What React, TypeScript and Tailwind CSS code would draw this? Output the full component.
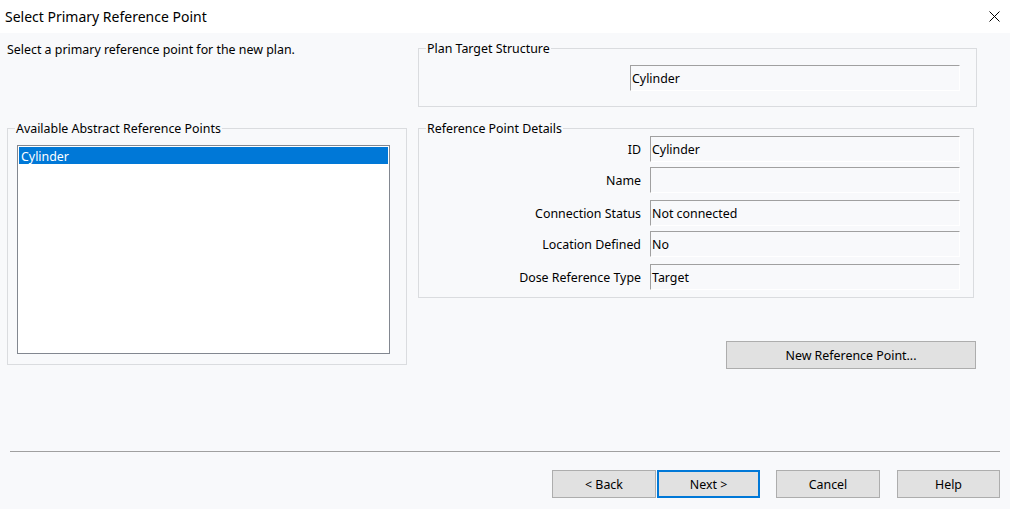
import React from "react";

const font = { fontFamily: '"Noto Sans", "Open Sans", sans-serif' };

function TextBox({ value, className = "" }: { value: string; className?: string }) {
  return (
    <div
      className={`h-[26px] flex items-center pl-[1px] pt-[2px] border-t border-l border-t-[#a0a0a0] border-l-[#a0a0a0] border-r border-b border-r-white border-b-white text-[12.4px] text-black ${className}`}
    >
      {value}
    </div>
  );
}

function Group({ label, className = "", children }: { label: string; className?: string; children?: React.ReactNode }) {
  return (
    <div className={`relative border border-[#dadcdf] ${className}`}>
      <span className="absolute -top-[8px] left-[7px] bg-[#f8f9fb] px-[1px] text-[12.4px] leading-[16px] text-black">
        {label}
      </span>
      {children}
    </div>
  );
}

function Button({ label, focused = false, className = "" }: { label: string; focused?: boolean; className?: string }) {
  return (
    <button
      className={`h-[28px] pt-[2px] bg-[#e1e1e1] text-[12.4px] text-black flex items-center justify-center ${
        focused ? "border-2 border-[#0078d7]" : "border border-[#adadad]"
      } ${className}`}
    >
      {label}
    </button>
  );
}

export default function App() {
  const details = [
    { label: "ID", value: "Cylinder", mt: "mt-[7px]" },
    { label: "Name", value: "", mt: "mt-[5px]" },
    { label: "Connection Status", value: "Not connected", mt: "mt-[7px]" },
    { label: "Location Defined", value: "No", mt: "mt-[5px]" },
    { label: "Dose Reference Type", value: "Target", mt: "mt-[7px]" },
  ];

  return (
    <div className="w-[1010px] h-[509px] flex flex-col bg-[#f8f9fb] overflow-hidden" style={font}>
      {/* Title bar */}
      <div className="h-[33px] bg-white flex items-center justify-between pl-[5px] pr-[10px]">
        <span className="text-[14px] text-black">Select Primary Reference Point</span>
        <svg width="11" height="11" viewBox="0 0 11 11" className="text-black">
          <path d="M0.5 0.5 L10.5 10.5 M10.5 0.5 L0.5 10.5" stroke="currentColor" strokeWidth="1" />
        </svg>
      </div>

      {/* Main content */}
      <div className="flex items-start">
        {/* Left column */}
        <div className="ml-[7px] w-[400px] flex flex-col">
          <p className="mt-[9px] text-[12.4px] leading-[16px] text-black">
            Select a primary reference point for the new plan.
          </p>
          <Group label="Available Abstract Reference Points" className="mt-[70px] h-[237px]">
            <div className="ml-[9px] mt-[16px] w-[373px] h-[209px] border border-[#828790] bg-white p-[1px]">
              <div className="h-[17px] bg-[#0078d7] text-white text-[12.4px] leading-[19px] pl-[2px] overflow-hidden">
                Cylinder
              </div>
            </div>
          </Group>
        </div>

        {/* Right column */}
        <div className="ml-[11px] w-[559px] flex flex-col">
          <Group label="Plan Target Structure" className="mt-[15px] h-[59px]">
            <div className="mt-[16px] ml-[211px] w-[330px]">
              <TextBox value="Cylinder" />
            </div>
          </Group>

          <Group label="Reference Point Details" className="mt-[21px] w-[556px] h-[170px]">
            <div className="flex flex-col">
              {details.map((d) => (
                <div key={d.label} className={`flex items-center ${d.mt}`}>
                  <span className="w-[222px] pt-[2px] text-right text-[12.4px] text-black">{d.label}</span>
                  <TextBox value={d.value} className="ml-[9px] w-[310px]" />
                </div>
              ))}
            </div>
          </Group>

          <div className="flex justify-end mt-[43px] mr-[1px]">
            <Button label="New Reference Point..." className="w-[250px]" />
          </div>
        </div>
      </div>

      {/* Footer */}
      <div className="mt-[82px] ml-[10px] w-[990px] h-px bg-[#a0a0a0]" />
      <div className="mt-[18px] flex pl-[552px]">
        <Button label="< Back" className="w-[104px]" />
        <Button label="Next >" focused className="ml-[1px] w-[103px]" />
        <Button label="Cancel" className="ml-[16px] w-[104px]" />
        <Button label="Help" className="ml-[17px] w-[103px]" />
      </div>
    </div>
  );
}
